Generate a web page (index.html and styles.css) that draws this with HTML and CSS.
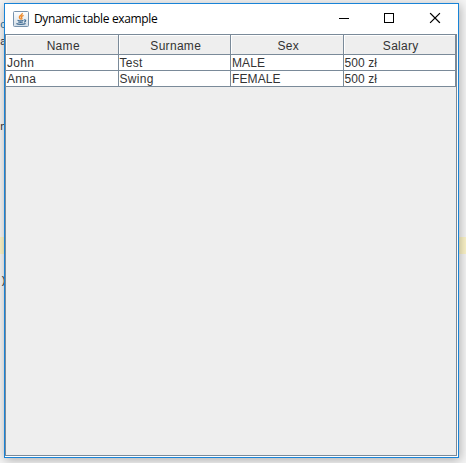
FILE: index.html
```html
<!DOCTYPE html>
<html lang="en">
<head>
<meta charset="utf-8">
<title>Dynamic table example</title>
<link rel="stylesheet" href="styles.css">
</head>
<body>
<div class="editor-line"></div>
<span class="code code-a">c</span>
<span class="code code-b">a</span>
<span class="code code-c">n</span>
<span class="code code-d">)</span>
<main class="window">
  <header class="titlebar">
    <svg class="app-icon" width="16" height="16" viewBox="0 0 16 16">
      <defs><linearGradient id="tile" x1="0" y1="0" x2="0" y2="1"><stop offset="0" stop-color="#fff"/><stop offset="1" stop-color="#d3dee7"/></linearGradient></defs>
      <rect x=".5" y=".5" width="15" height="15" rx="1" fill="url(#tile)" stroke="#7893ad"/>
      <path d="M9.3 2C9.8 4 6 4.700 6.400 6.300c.2.9 1 1.300 1.300 2.200M10.600 4.300C8.700 5 7.900 5.800 8.700 6.700c.5.6.2 1.200-.3 1.700" fill="none" stroke="#ed8b2d" stroke-width="1.400"/>
      <path d="M4.500 9.300c1.600.6 4.300.6 6 0M5.200 11c1.500.5 3.400.5 4.800 0M11 9c2.300-.5 2.200 1.700 0 2.200M3.400 12.500c1.500 1.200 7.400 1.200 9.200 0" fill="none" stroke="#456f94" stroke-width="1.200"/>
    </svg>
    <h1 class="title">Dynamic table example</h1>
    <svg class="controls" width="104" height="12" viewBox="0 0 104 12" fill="none" stroke="#000">
      <path d="M0 6.500h10M45.500 1.500h9v9h-9z" shape-rendering="crispEdges"/>
      <path d="M91.500 1.500l9 9M100.500 1.500l-9 9" stroke-width="1.200" stroke-linecap="square"/>
    </svg>
  </header>
  <section class="pane">
    <table class="grid">
      <thead><tr><th>Name</th><th>Surname</th><th>Sex</th><th>Salary</th></tr></thead>
      <tbody>
        <tr><td>John</td><td>Test</td><td>MALE</td><td>500 zł</td></tr>
        <tr><td>Anna</td><td>Swing</td><td>FEMALE</td><td>500 zł</td></tr>
      </tbody>
    </table>
  </section>
</main>
</body>
</html>
```
FILE: styles.css
```css
* { box-sizing: border-box; }
body {
  margin: 0;
  width: 466px;
  height: 463px;
  padding: 3px 7px 5px 4px;
  overflow: hidden;
  position: relative;
  background: #f5f5f5;
}
.editor-line {
  position: absolute;
  left: 0;
  top: 237px;
  width: 466px;
  height: 17px;
  background: #fcf4c8;
}
.code {
  position: absolute;
  left: 0;
  font: 11px/12px "Liberation Mono", monospace;
  color: #333;
}
.code-a { top: 19px; color: #26719e; }
.code-b { top: 36px; }
.code-c { top: 121px; }
.code-d { top: 275px; }
.window {
  position: relative;
  width: 455px;
  height: 455px;
  border: 1px solid #1883d7;
  background: #fff;
  box-shadow: 1px 2px 10px rgba(0, 0, 0, .3);
}
.titlebar {
  height: 30px;
  display: flex;
  align-items: center;
  padding: 0 15px 0 8px;
}
.app-icon { margin-top: -1px; }
.title {
  margin: 0 auto 0 5px;
  font: 12px/16px "Open Sans", sans-serif;
  letter-spacing: -.36px;
  color: #000;
  white-space: nowrap;
}
.controls { margin-top: -3px; }
.pane {
  width: 452px;
  height: 422px;
  border: 1px solid #7a8a99;
  background: #eee;
}
.grid {
  width: 450px;
  table-layout: fixed;
  border-collapse: separate;
  border-spacing: 0;
  font: 12px/14px "Liberation Sans", Arial, sans-serif;
  letter-spacing: .3px;
  color: #333;
}
.grid th,
.grid td {
  padding: 0;
  border-right: 1px solid #7a8a99;
  border-bottom: 1px solid #7a8a99;
}
.grid th {
  height: 20px;
  padding: 3px 0 0 3px;
  font-weight: normal;
  text-align: center;
  background: #eee;
  box-shadow: inset 1px 1px #fff;
}
.grid td {
  height: 16px;
  padding: 1px 0 0 1px;
  background: #fff;
}
.grid td:nth-child(n+3) { letter-spacing: .1px; }
```
